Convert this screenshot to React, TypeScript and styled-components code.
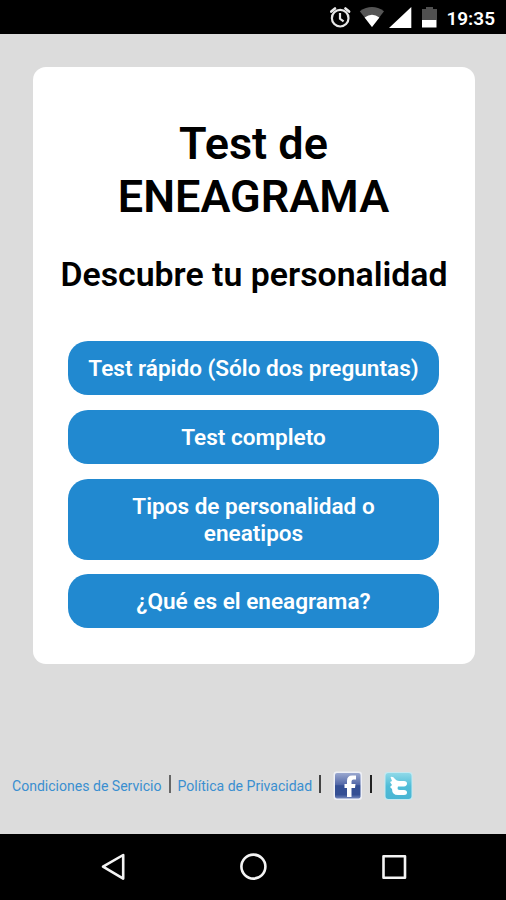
import React from 'react';
import styled, { createGlobalStyle } from 'styled-components';

const GlobalStyle = createGlobalStyle`
  * { box-sizing: border-box; }
  body { margin: 0; font-family: Roboto, sans-serif; }
`;
const Screen = styled.div`
  width: 506px;
  height: 900px;
  display: flex;
  flex-direction: column;
  background: #dcdcdc;
  overflow: hidden;
`;
const StatusBar = styled.header`
  height: 34px;
  background: #000;
  display: flex;
  align-items: center;
  justify-content: flex-end;
  padding-right: 11px;
  color: #fff;
`;
const StatusIcons = styled.svg`
  width: 110px;
  height: 34px;
  margin-right: 7px;
`;
const Clock = styled.span`
  font-size: 19px;
  font-weight: 600;
  line-height: 34px;
  padding-top: 3px;
`;
const Card = styled.main`
  width: 442px;
  height: 597px;
  margin: 33px 0 0 33px;
  background: #fff;
  border-radius: 13px;
  padding: 50px 36px 0;
  text-align: center;
  color: #000;
`;
const Title = styled.h1`
  margin: 0 0 0 -1px;
  font-size: 45px;
  line-height: 53px;
  font-weight: 600;
`;
const Subtitle = styled.h2`
  margin: 32px -20px 0;
  font-size: 33.85px;
  line-height: 40px;
  font-weight: 600;
  white-space: nowrap;
`;
const Menu = styled.nav`
  display: flex;
  flex-direction: column;
  gap: 14.6px;
  margin: 46.3px 0 0 -1px;
  width: 371px;
`;
const MenuButton = styled.button<{ $wide?: boolean }>`
  border: 0;
  border-radius: 20px;
  background: #2189d0;
  color: #fff;
  padding: 14px ${p => (p.$wide ? 0 : 40)}px 13.1px;
  font: 600 22.55px/27px Roboto, sans-serif;
`;
const Footer = styled.footer`
  display: flex;
  align-items: center;
  height: 32px;
  margin: 105.7px 0 0 12px;
  font-size: 14.05px;
`;
const FooterLink = styled.a`
  color: #3a8fd0;
  white-space: nowrap;
`;
const Divider = styled.i<{ $tone?: string }>`
  width: 2px;
  height: 18px;
  margin: -3px 7px 0;
  background: ${p => p.$tone ?? '#222'};
`;
const SocialIcon = styled.svg<{ $start: number }>`
  width: 30px;
  height: 30px;
  margin-left: ${p => p.$start}px;
`;
const NavBar = styled.nav`
  height: 66px;
  margin-top: auto;
  background: #000;
  display: flex;
  align-items: center;
  justify-content: center;
`;
const NavIcons = styled.svg`
  width: 506px;
  height: 66px;
  fill: none;
  stroke: #f4f4f4;
  stroke-width: 2.6;
  stroke-linejoin: round;
`;

export default function App() {
  return (
    <Screen>
      <GlobalStyle />
      <StatusBar>
        <StatusIcons viewBox="329 0 110 34">
          <g fill="none" stroke="#e8e8e8" strokeWidth="2.2" strokeLinecap="round">
            <circle cx="340.2" cy="18.2" r="8.3" />
            <path d="M331.3 11.6 335 8.5M349.1 11.6 345.4 8.5" strokeWidth="2.6" />
            <path d="M340 13v5.8l3.6 2.6" strokeLinecap="butt" />
          </g>
          <path d="M359.8 11.2Q372 2.8 384 11.2L372 27z" fill="#555" />
          <path d="M364.6 17.4Q372 12.2 379.4 17.4L372 27z" fill="#fff" />
          <path d="M389 28 411.3 7V28z" fill="#fff" />
          <path d="M422 9h4V7h7v2h4v11h-15z" fill="#505050" />
          <path d="M422 20h14.5v7.5h-14.5z" fill="#fff" />
        </StatusIcons>
        <Clock>19:35</Clock>
      </StatusBar>
      <Card>
        <Title>Test de<br />ENEAGRAMA</Title>
        <Subtitle>Descubre tu personalidad</Subtitle>
        <Menu>
          <MenuButton $wide>Test rápido (Sólo dos preguntas)</MenuButton>
          <MenuButton>Test completo</MenuButton>
          <MenuButton>Tipos de personalidad o eneatipos</MenuButton>
          <MenuButton>¿Qué es el eneagrama?</MenuButton>
        </Menu>
      </Card>
      <Footer>
        <FooterLink>Condiciones de Servicio</FooterLink>
        <Divider $tone="#666" />
        <FooterLink>Política de Privacidad</FooterLink>
        <Divider $tone="#444" />
        <SocialIcon $start={5} viewBox="0 0 30 30">
          <defs>
            <linearGradient id="fb" x2="0" y2="1">
              <stop stopColor="#9aa8d0" />
              <stop offset=".45" stopColor="#5368a8" />
              <stop offset=".5" stopColor="#344f94" />
              <stop offset=".85" stopColor="#344f94" />
              <stop offset="1" stopColor="#7286bd" />
            </linearGradient>
          </defs>
          <rect x=".5" y=".5" width="28.5" height="28.5" rx="3" fill="#eef0f6" />
          <rect x="2" y="2" width="25.5" height="25.5" rx="2" fill="url(#fb)" />
          <path d="M14 26V17H11.5V13H14V10Q14 4.5 19 4.5H23V8.5H20.5Q18.5 8.5 18.5 10.5V13H22.5L22 17H18.5V26z" fill="#fff" />
        </SocialIcon>
        <Divider />
        <SocialIcon $start={5} viewBox="0 0 30 30">
          <defs>
            <linearGradient id="tw" x2="0" y2="1">
              <stop stopColor="#8fd9e8" />
              <stop offset=".5" stopColor="#50bdd8" />
              <stop offset="1" stopColor="#49b5d3" />
            </linearGradient>
          </defs>
          <rect x=".5" y="1" width="28" height="28" rx="3" fill="#c4e9f1" />
          <rect x="1.5" y="2" width="26" height="26" rx="3" fill="url(#tw)" />
          <path d="M6.5 6Q9 5 11 8 13 10.5 16 10H20Q23 10 23 12.5T20 15.5H14Q12.5 19 16 19H20Q23 19 23 21.5T20 24H14Q8 24 8 18L6 16 8 14 6 11 8 10z" fill="#fff" />
        </SocialIcon>
      </Footer>
      <NavBar>
        <NavIcons viewBox="0 834 506 66">
          <path d="M103 866.7 123.2 855V878.6z" />
          <circle cx="253.4" cy="866.6" r="12" />
          <rect x="383.5" y="856.2" width="21.5" height="21.5" />
        </NavIcons>
      </NavBar>
    </Screen>
  );
}
